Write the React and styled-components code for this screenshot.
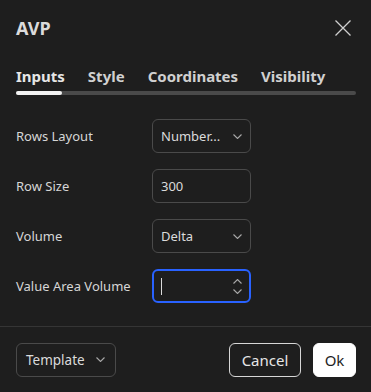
import React from 'react';
import styled, { createGlobalStyle } from 'styled-components';

const Global = createGlobalStyle`
  html, body {
    margin: 0;
    padding: 0;
    background: #1e1e1e;
  }
  body {
    font-family: "Noto Sans", "Open Sans", Arial, sans-serif;
    color: #dbdbdb;
  }
`;

const Dialog = styled.div`
  width: 371px;
  height: 392px;
  background: #1e1e1e;
  display: flex;
  flex-direction: column;
  box-sizing: border-box;
`;

const Header = styled.div`
  display: flex;
  align-items: center;
  justify-content: space-between;
  height: 56px;
  padding: 0 20px 0 16px;
  box-sizing: border-box;
`;

const Title = styled.div`
  font-size: 18px;
  font-weight: 700;
  color: #dbdbdb;
`;

const CloseBtn = styled.button`
  background: none;
  border: 0;
  padding: 0;
  width: 16px;
  height: 16px;
  display: flex;
  cursor: pointer;
`;

const Tabs = styled.div`
  display: flex;
  gap: 23px;
  padding: 4px 16px 0;
  height: 35px;
  box-sizing: border-box;
  align-items: center;
`;

const Tab = styled.div`
  font-size: 15px;
  font-weight: 700;
  color: ${({ active }) => (active ? '#e6e6e6' : '#d0d0d0')};
  cursor: pointer;
`;

const Track = styled.div`
  margin: 0 15px 0 16px;
  height: 4px;
  border-radius: 2px;
  background: #4a4a4a;
  display: flex;
`;

const Thumb = styled.div`
  height: 4px;
  border-radius: 2px;
  background: #f2f2f2;
`;

const Body = styled.div`
  flex: 1;
  display: flex;
  flex-direction: column;
  gap: 16px;
  padding: 24px 16px 0;
`;

const Row = styled.div`
  display: grid;
  grid-template-columns: 136px 99px;
  align-items: center;
  height: 34px;
`;

const Label = styled.div`
  font-size: 13px;
  color: #d6d6d6;
`;

const Field = styled.div`
  height: 34px;
  box-sizing: border-box;
  border: ${({ focused }) => (focused ? '2px solid #2962ff' : '1px solid #4a4a4a')};
  border-radius: 6px;
  display: flex;
  align-items: center;
  justify-content: space-between;
  padding: ${({ focused }) => (focused ? '0 6px 0 7px' : '0 8px 0 8px')};
  font-size: 13px;
  color: #dbdbdb;
  background: #1e1e1e;
`;

const Value = styled.span`
  white-space: nowrap;
`;

const Caret = styled.span`
  width: 1px;
  height: 17px;
  background: #dbdbdb;
`;

const Spinner = styled.div`
  display: flex;
  flex-direction: column;
  gap: 5px;
  margin-right: 1px;
`;

const Footer = styled.div`
  border-top: 1px solid #353535;
  height: 66px;
  box-sizing: border-box;
  padding: 0 15px 0 16px;
  display: flex;
  align-items: center;
  gap: 12px;
`;

const TemplateBtn = styled.button`
  width: 100px;
  height: 34px;
  box-sizing: border-box;
  border: 1px solid #4a4a4a;
  border-radius: 6px;
  background: transparent;
  color: #dbdbdb;
  font-family: inherit;
  font-size: 13.5px;
  display: flex;
  align-items: center;
  justify-content: space-between;
  padding: 0 10px 0 9px;
  margin-right: auto;
`;

const Button = styled.button`
  height: 34px;
  box-sizing: border-box;
  border-radius: 6px;
  font-family: inherit;
  font-size: 15px;
  padding: 0;
  width: ${({ w }) => w}px;
  border: 1px solid ${({ primary }) => (primary ? '#ffffff' : '#d6d6d6')};
  background: ${({ primary }) => (primary ? '#ffffff' : 'transparent')};
  color: ${({ primary }) => (primary ? '#1e1e1e' : '#e6e6e6')};
  cursor: pointer;
`;

const Chevron = () => (
  <svg width="9" height="5" viewBox="0 0 9 5" fill="none">
    <path d="M0.5 0.5l4 4 4-4" stroke="#a8a8a8" strokeWidth="1.1" />
  </svg>
);

const ChevronUp = () => (
  <svg width="9" height="5" viewBox="0 0 9 5" fill="none">
    <path d="M0.5 4.5l4-4 4 4" stroke="#a8a8a8" strokeWidth="1.1" />
  </svg>
);

const tabs = [
  { name: 'Inputs', active: true },
  { name: 'Style' },
  { name: 'Coordinates' },
  { name: 'Visibility' },
];

export default function App() {
  return (
    <Dialog>
      <Global />
      <Header>
        <Title>AVP</Title>
        <CloseBtn aria-label="Close">
          <svg width="16" height="16" viewBox="0 0 16 16">
            <path d="M0.5 0.5l15 15M15.5 0.5l-15 15" stroke="#cfcfcf" strokeWidth="1.3" />
          </svg>
        </CloseBtn>
      </Header>
      <Tabs>
        {tabs.map((t) => (
          <Tab key={t.name} active={t.active}>{t.name}</Tab>
        ))}
      </Tabs>
      <Track>
        <Thumb style={{ width: 46 }} />
      </Track>
      <Body>
        <Row>
          <Label>Rows Layout</Label>
          <Field>
            <Value>Number...</Value>
            <Chevron />
          </Field>
        </Row>
        <Row>
          <Label>Row Size</Label>
          <Field>
            <Value>300</Value>
          </Field>
        </Row>
        <Row>
          <Label>Volume</Label>
          <Field>
            <Value>Delta</Value>
            <Chevron />
          </Field>
        </Row>
        <Row>
          <Label>Value Area Volume</Label>
          <Field focused>
            <Caret />
            <Spinner>
              <ChevronUp />
              <Chevron />
            </Spinner>
          </Field>
        </Row>
      </Body>
      <Footer>
        <TemplateBtn>
          Template
          <Chevron />
        </TemplateBtn>
        <Button w={72}>Cancel</Button>
        <Button primary w={43}>Ok</Button>
      </Footer>
    </Dialog>
  );
}
